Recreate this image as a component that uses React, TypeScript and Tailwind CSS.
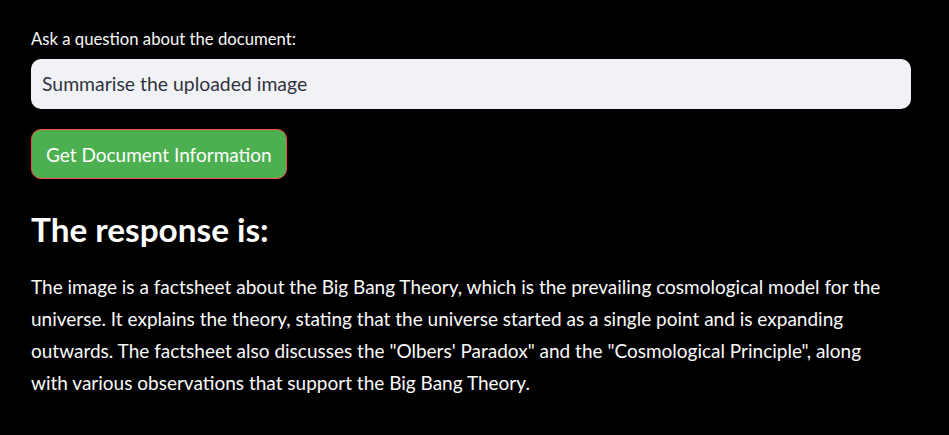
import React from "react";

export default function App() {
  const font = { fontFamily: '"Lato", "Liberation Sans", sans-serif' };
  return (
    <div className="min-h-[435px] w-full bg-black text-[#fafafa]" style={font}>
      <div className="w-[880px] ml-[31px] pt-[24px] flex flex-col">
        <label className="text-[16.7px] leading-[30px] min-h-[30px] mb-[5px] text-[#fafafa]">
          Ask a question about the document:
        </label>
        <div className="h-[50px] w-full rounded-[10px] bg-[#f0f2f6] flex items-center pl-[11px] text-[19.4px] text-[#31333f]">
          Summarise the uploaded image
        </div>
        <div className="mt-[20px]">
          <button className="h-[50px] px-[14px] rounded-[10px] bg-[#4caf50] border border-[#ff4b4b] text-white text-[19px] leading-none">
            Get Document Information
          </button>
        </div>
        <h3 className="mt-[29px] text-[33.3px] font-bold leading-[42px] text-white">
          The response is:
        </h3>
        <p className="mt-[21px] text-[19px] leading-[32px] text-[#fafafa] whitespace-nowrap">
          The image is a factsheet about the Big Bang Theory, which is the prevailing cosmological model for the
          <br />
          universe. It explains the theory, stating that the universe started as a single point and is expanding
          <br />
          outwards. The factsheet also discusses the "Olbers' Paradox" and the "Cosmological Principle", along
          <br />
          with various observations that support the Big Bang Theory.
        </p>
      </div>
    </div>
  );
}
